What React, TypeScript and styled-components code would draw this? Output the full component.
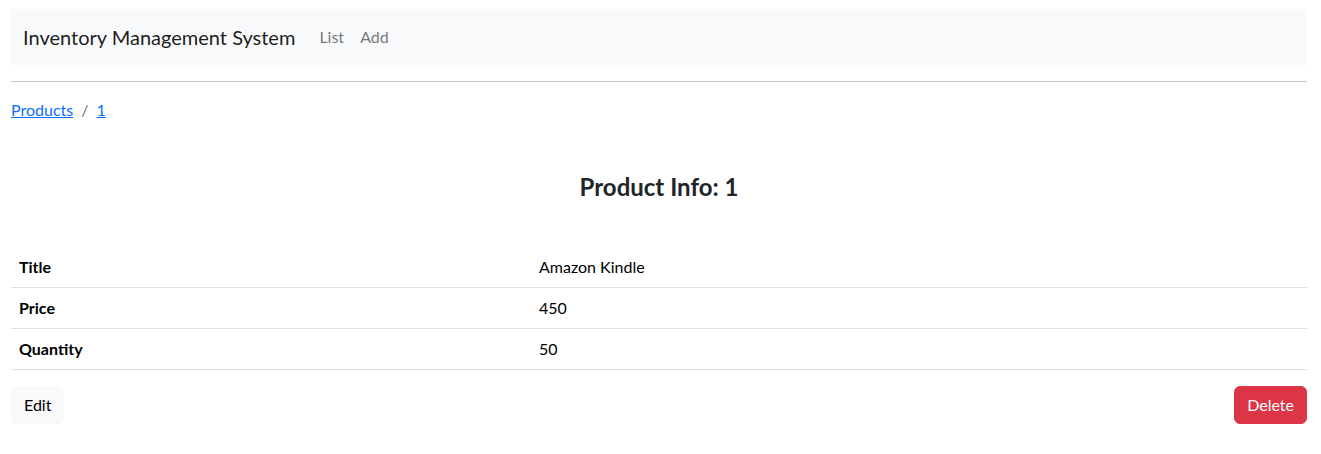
import React from "react";
import styled, { createGlobalStyle } from "styled-components";

const Global = createGlobalStyle`
  * { box-sizing: border-box; }
  body {
    margin: 0;
    font-family: Lato, "Noto Sans", sans-serif;
    font-size: 16px;
    line-height: 1.5;
    color: #212529;
    background: #fff;
  }
`;

const Page = styled.div`
  padding: 9px 14px 0 11px;
`;

const Navbar = styled.nav`
  display: flex;
  align-items: center;
  background: #f8f9fa;
  padding: 8px 12px;
  height: 56px;
`;

const Brand = styled.a`
  font-size: 20px;
  line-height: 30px;
  padding: 5px 0;
  margin-right: 16px;
  color: rgba(0, 0, 0, 0.9);
  text-decoration: none;
`;

const NavLink = styled.a`
  padding: 8px;
  font-size: 16px;
  color: rgba(0, 0, 0, 0.55);
  text-decoration: none;
`;

const Rule = styled.hr`
  margin: 16px 0;
  border: 0;
  border-top: 1px solid #c8c8c8;
`;

const Breadcrumb = styled.ol`
  display: flex;
  list-style: none;
  margin: 0;
  padding: 0;
`;

const Crumb = styled.li<{ $first?: boolean }>`
  display: flex;
  ${(p) =>
    !p.$first &&
    `
    padding-left: 8px;
    &::before {
      content: "/";
      color: #6c757d;
      padding-right: 8px;
    }
  `}
`;

const CrumbLink = styled.a`
  color: #0d6efd;
  text-decoration: underline;
`;

const Heading = styled.h4`
  margin: 51px 0 45px;
  text-align: center;
  font-size: 24px;
  font-weight: 700;
  line-height: 1.2;
`;

const Table = styled.table`
  width: 100%;
  border-collapse: collapse;
  margin-bottom: 16px;
`;

const Cell = styled.td<{ $head?: boolean }>`
  padding: 8px;
  border-bottom: 1px solid #dee2e6;
  color: #000;
  text-align: left;
  font-weight: ${(p) => (p.$head ? 700 : 400)};
  width: ${(p) => (p.$head ? "520px" : "auto")};
`;

const Actions = styled.div`
  display: flex;
  justify-content: space-between;
`;

const Button = styled.button<{ $variant: "light" | "danger" }>`
  font-family: inherit;
  font-size: 16px;
  line-height: 24px;
  padding: 6px 12px;
  border-radius: 6px;
  border: 1px solid ${(p) => (p.$variant === "danger" ? "#dc3545" : "#f8f9fa")};
  background: ${(p) => (p.$variant === "danger" ? "#dc3545" : "#f8f9fa")};
  color: ${(p) => (p.$variant === "danger" ? "#fff" : "#000")};
  cursor: pointer;
`;

const rows = [
  ["Title", "Amazon Kindle"],
  ["Price", "450"],
  ["Quantity", "50"],
];

export default function App() {
  return (
    <>
      <Global />
      <Page>
        <Navbar>
          <Brand href="#">Inventory Management System</Brand>
          <NavLink href="#">List</NavLink>
          <NavLink href="#">Add</NavLink>
        </Navbar>
        <Rule />
        <Breadcrumb>
          <Crumb $first>
            <CrumbLink href="#">Products</CrumbLink>
          </Crumb>
          <Crumb>
            <CrumbLink href="#">1</CrumbLink>
          </Crumb>
        </Breadcrumb>
        <Heading>Product Info: 1</Heading>
        <Table>
          <tbody>
            {rows.map(([k, v]) => (
              <tr key={k}>
                <Cell as="th" $head>
                  {k}
                </Cell>
                <Cell>{v}</Cell>
              </tr>
            ))}
          </tbody>
        </Table>
        <Actions>
          <Button $variant="light">Edit</Button>
          <Button $variant="danger">Delete</Button>
        </Actions>
      </Page>
    </>
  );
}
